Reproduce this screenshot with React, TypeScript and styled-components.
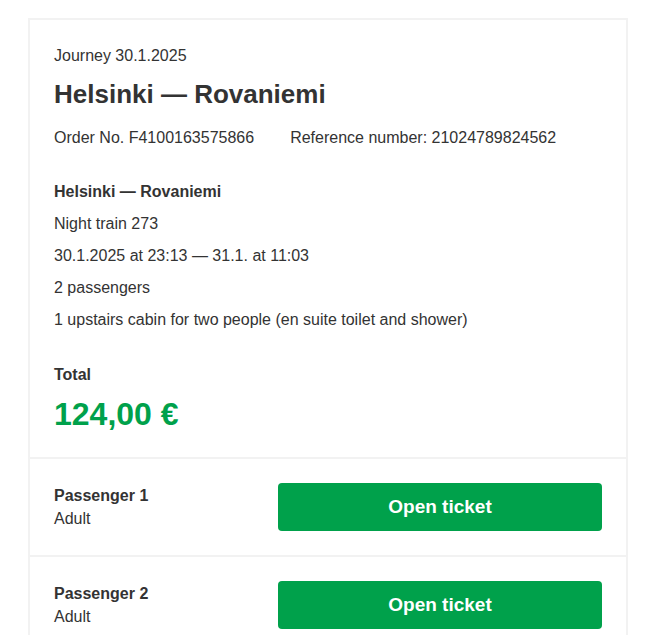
import React from "react";
import styled, { createGlobalStyle } from "styled-components";

const GlobalStyle = createGlobalStyle`
  body {
    margin: 0;
    background: #ffffff;
    font-family: "Liberation Sans", Arial, sans-serif;
    color: #333333;
  }
`;

const Page = styled.div`
  padding: 18px 0 0 28px;
`;

const Card = styled.div`
  box-sizing: border-box;
  width: 600px;
  border: 2px solid #f2f2f2;
  border-bottom: none;
  background: #ffffff;
`;

const Summary = styled.section`
  padding: 24px 24px 24px;
`;

const Text = styled.p<{ bold?: boolean; gap?: number }>`
  margin: ${({ gap }) => gap ?? 0}px 0 0;
  font-size: 16px;
  line-height: 24px;
  font-weight: ${({ bold }) => (bold ? 700 : 400)};
`;

const Title = styled.h1`
  margin: 11px 0 0;
  font-size: 26px;
  line-height: 30px;
  font-weight: 700;
`;

const OrderRow = styled.div`
  display: flex;
  gap: 36px;
  margin-top: 17px;
  font-size: 16px;
  line-height: 24px;
`;

const Details = styled.div`
  display: flex;
  flex-direction: column;
  gap: 8px;
  margin-top: 30px;
`;

const Price = styled.div`
  margin-top: 8px;
  font-size: 32px;
  line-height: 38px;
  font-weight: 700;
  color: #00a14b;
`;

const PassengerRow = styled.div`
  display: grid;
  grid-template-columns: 2fr 3fr;
  gap: 8px;
  align-items: center;
  padding: 24px;
  border-top: 2px solid #f2f2f2;
`;

const PassengerInfo = styled.div`
  display: flex;
  flex-direction: column;
  font-size: 16px;
  line-height: 23px;
`;

const PassengerName = styled.span`
  font-weight: 700;
`;

const TicketButton = styled.button`
  height: 48px;
  border: none;
  border-radius: 4px;
  background: #00a14b;
  color: #ffffff;
  font-family: "Liberation Sans", Arial, sans-serif;
  font-size: 19px;
  font-weight: 700;
  cursor: pointer;
`;

const passengers = [
  { name: "Passenger 1", type: "Adult" },
  { name: "Passenger 2", type: "Adult" },
];

export default function App() {
  return (
    <Page>
      <GlobalStyle />
      <Card>
        <Summary>
          <Text>Journey 30.1.2025</Text>
          <Title>Helsinki — Rovaniemi</Title>
          <OrderRow>
            <span>Order No. F4100163575866</span>
            <span>Reference number: 21024789824562</span>
          </OrderRow>
          <Details>
            <Text bold>Helsinki — Rovaniemi</Text>
            <Text>Night train 273</Text>
            <Text>30.1.2025 at 23:13 — 31.1. at 11:03</Text>
            <Text>2 passengers</Text>
            <Text>1 upstairs cabin for two people (en suite toilet and shower)</Text>
          </Details>
          <Text bold gap={31}>
            Total
          </Text>
          <Price>124,00 €</Price>
        </Summary>
        {passengers.map((p) => (
          <PassengerRow key={p.name}>
            <PassengerInfo>
              <PassengerName>{p.name}</PassengerName>
              <span>{p.type}</span>
            </PassengerInfo>
            <TicketButton>Open ticket</TicketButton>
          </PassengerRow>
        ))}
      </Card>
    </Page>
  );
}
